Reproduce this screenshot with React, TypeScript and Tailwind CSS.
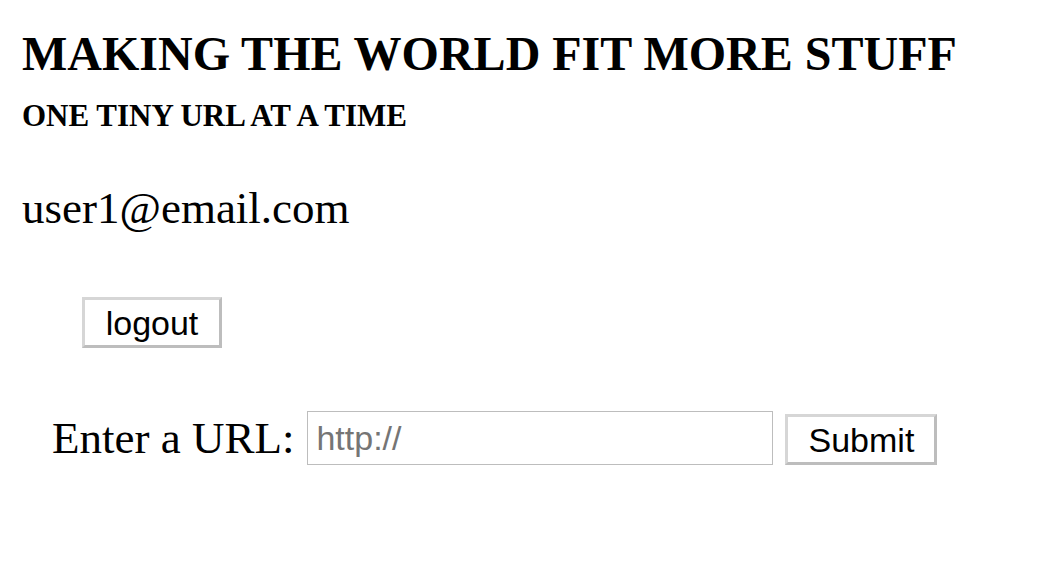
export default function App() {
  return (
    <div className="min-h-[576px] bg-white text-black pl-[22px] pt-[28px]" style={{ fontFamily: '"Liberation Serif", "Times New Roman", serif' }}>
      <h1 className="text-[48px] font-bold leading-[52px] m-0">MAKING THE WORLD FIT MORE STUFF</h1>
      <h2 className="text-[31px] font-bold leading-[34px] mt-[19px]">ONE TINY URL AT A TIME</h2>
      <div className="text-[45px] leading-[52px] mt-[49px]">user1@email.com</div>
      <div className="mt-[63px] pl-[60px]">
        <button
          className="w-[140px] h-[51px] bg-white border-[3px] border-solid border-t-[#d6d6d6] border-l-[#d6d6d6] border-r-[#bdbdbd] border-b-[#bdbdbd] text-[34px] leading-none"
          style={{ fontFamily: '"Liberation Sans", Arial, sans-serif' }}
        >
          logout
        </button>
      </div>
      <div className="mt-[63px] pl-[30px] flex items-center">
        <span className="text-[45px] leading-[52px]">Enter a URL:</span>
        <input
          placeholder="http://"
          className="ml-[13px] w-[466px] h-[54px] border border-[#bdbdbd] px-[8px] text-[34px] placeholder:text-[#757575] outline-none"
          style={{ fontFamily: '"Liberation Sans", Arial, sans-serif' }}
        />
        <button
          className="ml-[12px] mt-[3px] w-[152px] h-[51px] bg-white border-[3px] border-solid border-t-[#d6d6d6] border-l-[#d6d6d6] border-r-[#bdbdbd] border-b-[#bdbdbd] text-[34px] leading-none"
          style={{ fontFamily: '"Liberation Sans", Arial, sans-serif' }}
        >
          Submit
        </button>
      </div>
    </div>
  );
}
